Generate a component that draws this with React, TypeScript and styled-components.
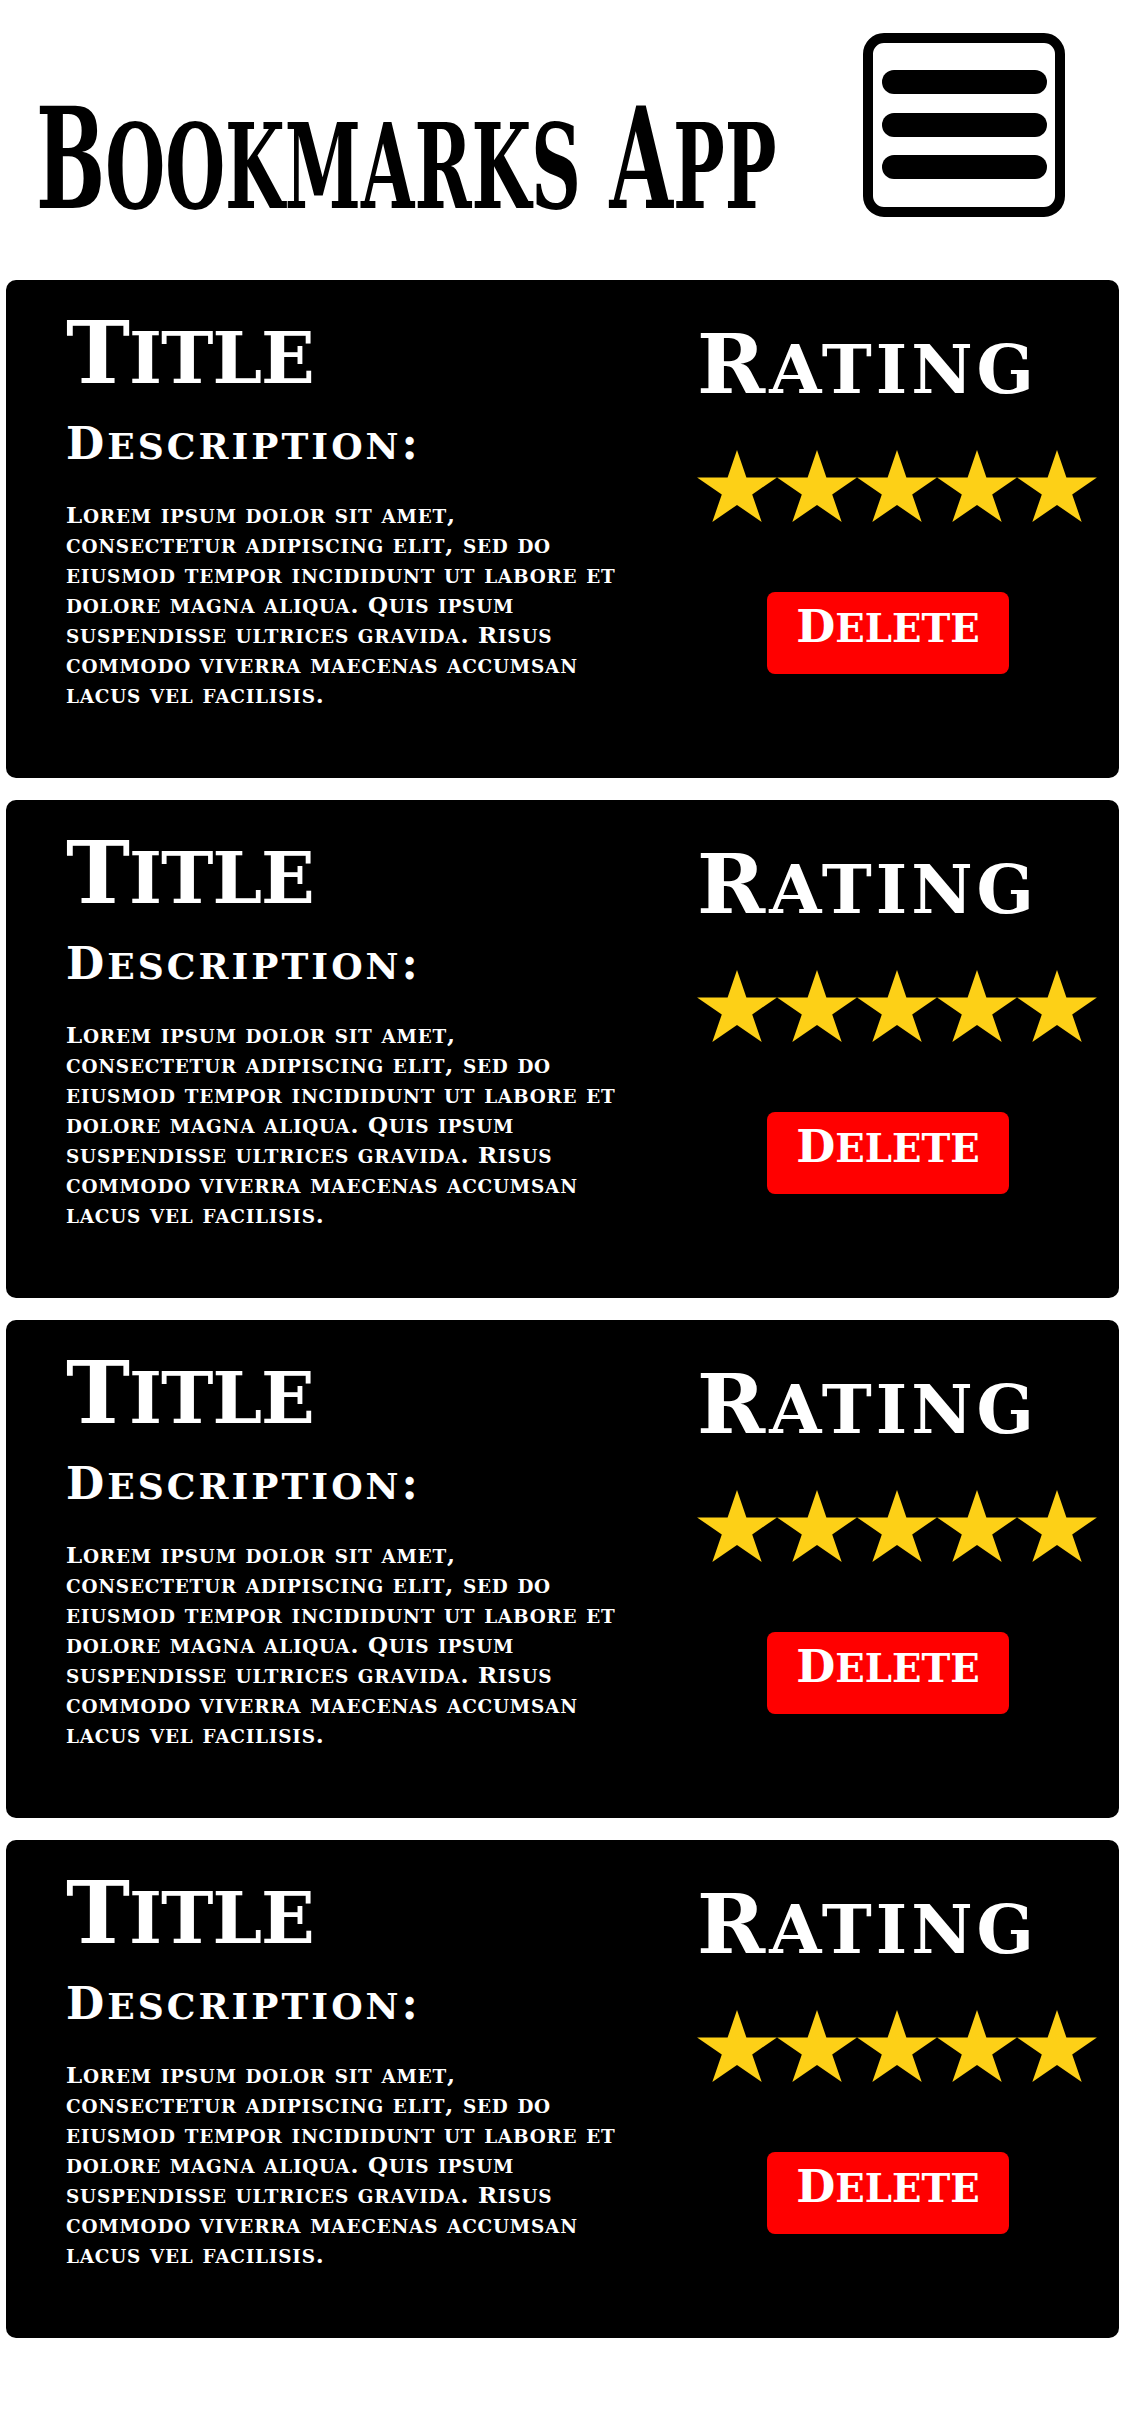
import styled, { createGlobalStyle } from 'styled-components'

const GlobalStyle = createGlobalStyle`
  body {
    margin: 0;
    background: #fff;
    font-family: "DejaVu Serif", "Liberation Serif", serif;
  }
`

const Header = styled.header`
  display: flex;
  justify-content: space-between;
  align-items: flex-start;
  height: 280px;
  box-sizing: border-box;
  padding: 0 60px 0 36px;
`

const Brand = styled.h1`
  margin: 89px 0 0;
  width: 738px;
  font-size: 140px;
  font-weight: bold;
  line-height: 1;
  white-space: nowrap;
  color: #000;
  transform: scaleX(0.585);
  transform-origin: left top;
`

const MenuButton = styled.button`
  margin-top: 33px;
  padding: 0;
  border: 0;
  background: none;
  line-height: 0;
`

const List = styled.main`
  display: flex;
  flex-direction: column;
  gap: 22px;
  padding: 0 6px;
`

const Card = styled.article`
  height: 498px;
  box-sizing: border-box;
  display: flex;
  padding: 28px 0 0 60px;
  background: #000;
  border-radius: 10px;
  color: #fff;
`

const Info = styled.div`
  flex: 0 0 631px;
`

const Title = styled.h2`
  margin: 0;
  font-size: 86px;
  font-weight: bold;
  line-height: 89px;
  letter-spacing: -1px;
`

const Label = styled.h3`
  margin: 25px 0 0;
  font-size: 44px;
  font-weight: bold;
  line-height: 1;
  letter-spacing: 3px;
`

const Body = styled.p`
  margin: 34px 0 0;
  font-size: 23px;
  font-weight: bold;
  line-height: 30px;
  letter-spacing: 0.8px;
`

const Line = styled.span`
  display: block;
  white-space: nowrap;
`

const Side = styled.div`
  margin-top: 15px;
  display: flex;
  flex-direction: column;
  align-items: flex-start;
`

const RatingHead = styled.h2`
  margin: 0;
  font-size: 82px;
  font-weight: bold;
  line-height: 1;
  letter-spacing: 4px;
`

const Stars = styled.div`
  margin-top: 45px;
  display: flex;
  line-height: 0;
`

const DeleteButton = styled.button`
  margin: 70px 0 0 70px;
  width: 242px;
  height: 82px;
  box-sizing: border-box;
  padding: 12px 0 25px;
  border: 0;
  border-radius: 8px;
  background: #ff0000;
  color: #fff;
  font-family: inherit;
  font-size: 45px;
  font-weight: bold;
  line-height: 1;
  cursor: pointer;
`

const Low = styled.span<{ $ratio: number }>`
  font-size: ${({ $ratio }) => $ratio}em;
  line-height: 1;
  text-transform: uppercase;
`

// copperplate-ish small caps: lowercase runs drawn as smaller capitals
function Caps({ text, ratio = 0.82 }: { text: string; ratio?: number }) {
  const parts = text.match(/[a-z]+|[^a-z]+/g) || []
  return (
    <>
      {parts.map((p, i) =>
        /^[a-z]/.test(p) ? (
          <Low key={i} $ratio={ratio}>
            {p}
          </Low>
        ) : (
          <span key={i}>{p}</span>
        )
      )}
    </>
  )
}

function MenuIcon() {
  return (
    <svg width="202" height="184" viewBox="0 0 202 184">
      <rect x="5" y="5" width="192" height="174" rx="16" fill="none" stroke="#000" strokeWidth="10" />
      <rect x="19" y="37" width="165" height="24" rx="12" fill="#000" />
      <rect x="19" y="80" width="165" height="24" rx="12" fill="#000" />
      <rect x="19" y="122" width="165" height="24" rx="12" fill="#000" />
    </svg>
  )
}

function Star() {
  return (
    <svg width="80" height="72" viewBox="0 0 80 76" preserveAspectRatio="none">
      <polygon
        fill="#fdd017"
        points="40,0 49.4,29.1 79.9,29 55.2,46.9 64.7,76 40,58 15.3,76 24.8,46.9 0.1,29 30.6,29.1"
      />
    </svg>
  )
}

// wrapped the same way as in the design
const lorem = [
  'Lorem ipsum dolor sit amet,',
  'consectetur adipiscing elit, sed do',
  'eiusmod tempor incididunt ut labore et',
  'dolore magna aliqua. Quis ipsum',
  'suspendisse ultrices gravida. Risus',
  'commodo viverra maecenas accumsan',
  'lacus vel facilisis.',
]

const bookmarks = [1, 2, 3, 4].map((id) => ({
  id,
  title: 'Title',
  description: lorem,
  rating: 5,
}))

export default function App() {
  return (
    <>
      <GlobalStyle />
      <Header>
        <Brand>
          <Caps text="Bookmarks App" ratio={0.84} />
        </Brand>
        <MenuButton aria-label="Menu">
          <MenuIcon />
        </MenuButton>
      </Header>
      <List>
        {bookmarks.map((b) => (
          <Card key={b.id}>
            <Info>
              <Title>
                <Caps text={b.title} />
              </Title>
              <Label>
                <Caps text="Description:" />
              </Label>
              <Body>
                {b.description.map((l, i) => (
                  <Line key={i}>
                    <Caps text={l} ratio={0.8} />
                  </Line>
                ))}
              </Body>
            </Info>
            <Side>
              <RatingHead>
                <Caps text="Rating" />
              </RatingHead>
              <Stars>
                {Array.from({ length: b.rating }).map((_, i) => (
                  <Star key={i} />
                ))}
              </Stars>
              <DeleteButton>
                <Caps text="Delete" ratio={0.86} />
              </DeleteButton>
            </Side>
          </Card>
        ))}
      </List>
    </>
  )
}
